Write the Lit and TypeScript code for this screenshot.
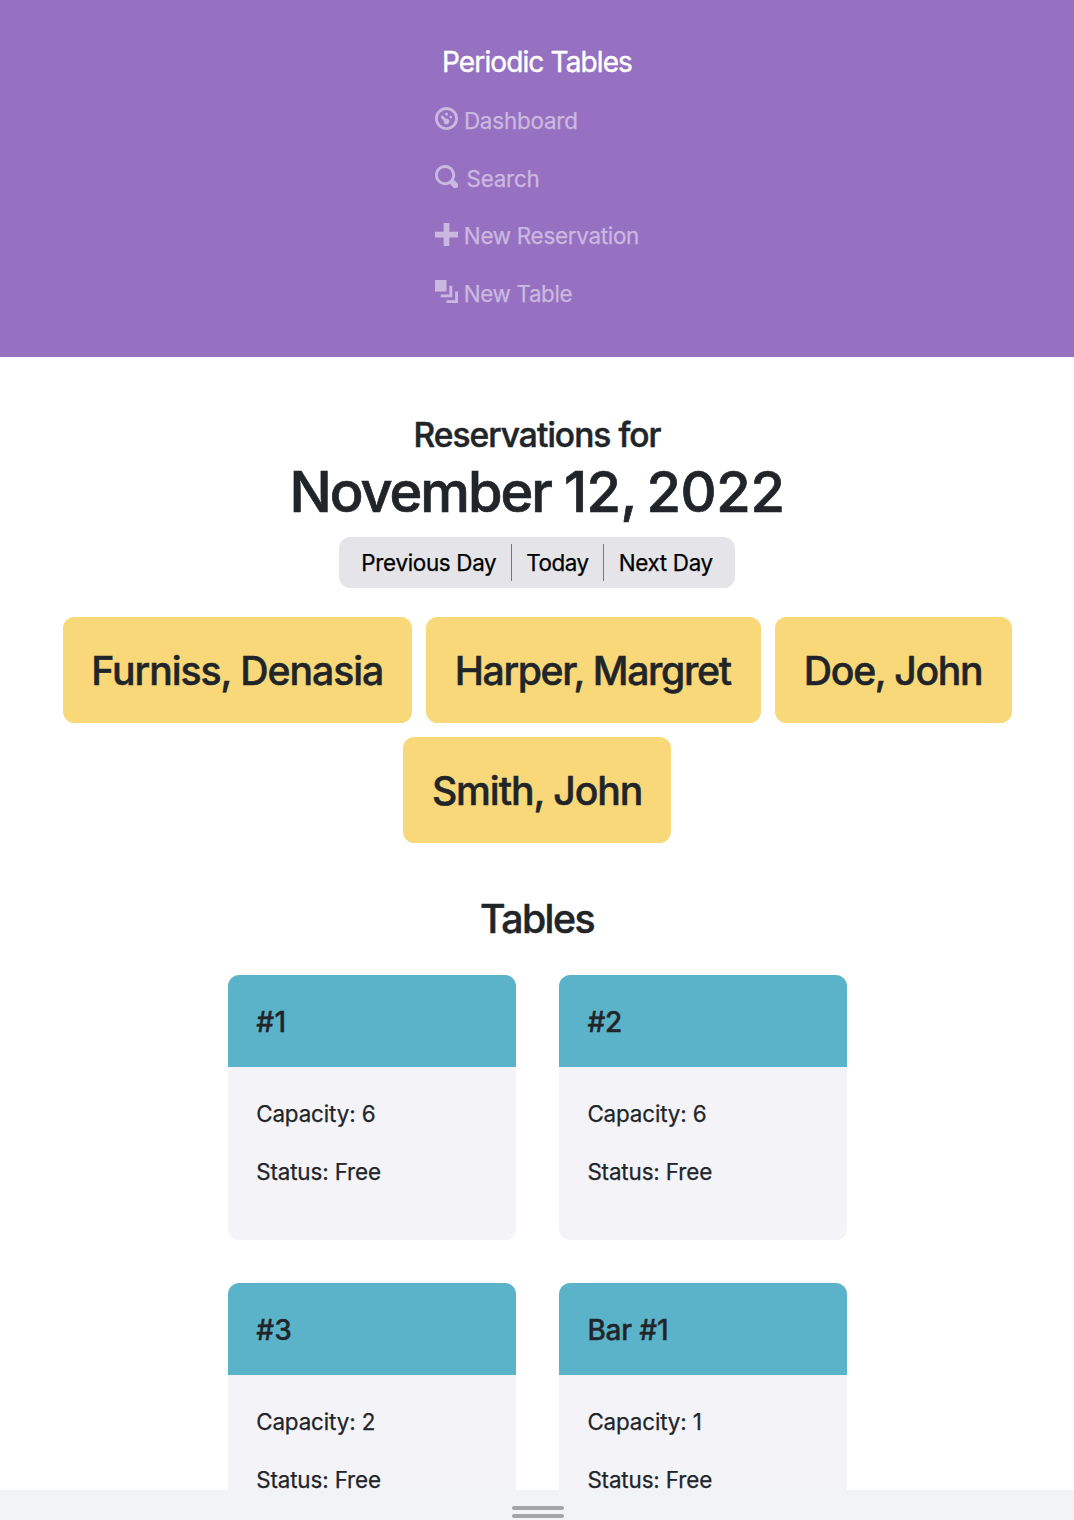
import { LitElement, html, svg, css, nothing } from "lit";
import { customElement, property } from "lit/decorators.js";
import { styleMap } from "lit/directives/style-map.js";

type IconName = "dashboard" | "search" | "plus" | "layers";

const icons = {
  dashboard: svg`<path fill-rule="evenodd" d="M4 0c-2.2 0-4 1.8-4 4s1.8 4 4 4 4-1.8 4-4-1.8-4-4-4zm0 1c1.66 0 3 1.34 3 3s-1.34 3-3 3-3-1.34-3-3 1.34-3 3-3z"/>
    <circle cx="4" cy="2.5" r=".5"/><circle cx="5.5" cy="3.5" r=".5"/>
    <path d="M2.34 3a.5.5 0 0 0-.19.84l.91.91c-.02.08-.06.16-.06.25 0 .55.45 1 1 1s1-.45 1-1-.45-1-1-1c-.09 0-.17.04-.25.06l-.91-.91a.5.5 0 0 0-.44-.16.5.5 0 0 0-.06 0z"/>`,
  search: svg`<path d="M3.5 0c-1.930 0-3.5 1.570-3.5 3.5s1.570 3.5 3.5 3.5c.59 0 1.170-.14 1.660-.41a1 1 0 0 0 .13.13l1 1a1.020 1.020 0 1 0 1.440-1.440l-1-1a1 1 0 0 0-.16-.13c.27-.49.44-1.060.44-1.660 0-1.930-1.550-3.5-3.5-3.5zm0 1c1.390 0 2.5 1.110 2.5 2.5 0 .66-.24 1.270-.66 1.720l-.03.03a1 1 0 0 0-.13.13c-.44.4-1.040.63-1.690.63-1.390 0-2.5-1.110-2.5-2.5s1.110-2.5 2.5-2.5z"/>`,
  plus: svg`<path d="M3 0v3h-3v2h3v3h2v-3h3v-2h-3v-3h-2z"/>`,
  layers: svg`<path d="M0 0v4h4v-4h-4zm5 2v3h-3v1h4v-4h-1zm2 2v3h-3v1h4v-4h-1z"/>`,
};

const spacing = (value: number) => styleMap({ letterSpacing: `${value}px` });

const navItems: { icon: IconName; label: string; tracking: number; gap: number }[] = [
  { icon: "dashboard", label: "Dashboard", tracking: -0.18, gap: 5.9 },
  { icon: "search", label: "Search", tracking: -0.2, gap: 8.5 },
  { icon: "plus", label: "New Reservation", tracking: -0.28, gap: 5.8 },
  { icon: "layers", label: "New Table", tracking: -0.37, gap: 5.8 },
];

const reservations = [
  { name: "Furniss, Denasia", tracking: -1.07, width: 349 },
  { name: "Harper, Margret", tracking: -1.37, width: 334.7 },
  { name: "Doe, John", tracking: -1.31, width: 236.4 },
  { name: "Smith, John", tracking: -1.08, width: 267.8 },
];

const tables = [
  { name: "#1", tracking: 0.4, capacity: 6, status: "Free" },
  { name: "#2", tracking: -0.3, capacity: 6, status: "Free" },
  { name: "#3", tracking: 0.3, capacity: 2, status: "Free" },
  { name: "Bar #1", tracking: -0.17, capacity: 1, status: "Free" },
];

@customElement("side-menu")
class SideMenu extends LitElement {
  static styles = css`
    :host { display: block; flex: none; }
    .bar {
      box-sizing: border-box; height: 357px; padding-top: 31.6px;
      background: #9771c1; color: #fff;
      display: flex; flex-direction: column; align-items: center;
    }
    .brand { font-size: 28px; -webkit-text-stroke: 0.4px currentColor; line-height: 60.4px; letter-spacing: -0.878px; white-space: nowrap; }
    .links { display: flex; flex-direction: column; width: 204px; margin: 0; padding: 0; list-style: none; }
    .link { display: flex; align-items: center; height: 57.6px; color: #cbb8e0; white-space: nowrap; }
    .icon { width: 23px; height: 23px; margin-bottom: 3.9px; fill: currentColor; flex: none; }
  `;
  render() {
    return html`<nav class="bar">
      <div class="brand">Periodic Tables</div>
      <ul class="links">
        ${navItems.map((item) => html`<li class="link" style=${styleMap({ gap: `${item.gap}px` })}>
          <svg class="icon" viewBox="0 0 8 8">${icons[item.icon]}</svg>
          <span style=${spacing(item.tracking)}>${item.label}</span>
        </li>`)}
      </ul>
    </nav>`;
  }
}

@customElement("table-card")
class TableCard extends LitElement {
  @property({ attribute: false }) table: (typeof tables)[number] | null = null;
  static styles = css`
    :host { display: block; }
    .card { height: 265px; border-radius: 11.5px; overflow: hidden; background: #f3f3f8; }
    .head {
      box-sizing: border-box; height: 92px; padding: 1.5px 28.4px 0;
      display: flex; align-items: center;
      background: #5ab3c8; font-size: 28px; font-weight: 500;
      -webkit-text-stroke: 0.35px currentColor;
    }
    .body { padding: 18px 28.4px 0; line-height: 57.6px; letter-spacing: -0.13px; }
    .line { margin: 0; }
  `;
  render() {
    const t = this.table;
    if (!t) return nothing;
    return html`<article class="card">
      <div class="head"><span style=${spacing(t.tracking)}>${t.name}</span></div>
      <div class="body">
        <p class="line">Capacity: ${t.capacity}</p>
        <p class="line">Status: ${t.status}</p>
      </div>
    </article>`;
  }
}

@customElement("app-root")
class AppRoot extends LitElement {
  static styles = css`
    :host {
      display: flex; flex-direction: column; height: 1520px; overflow: hidden;
      background: #fff; color: #212529;
      font-family: Inter, "Liberation Sans", sans-serif; font-size: 22.4px; font-weight: 400;
      -webkit-text-stroke: 0.25px currentColor;
    }
    .page { height: 1490px; flex: none; overflow: hidden; display: flex; flex-direction: column; }
    .content { flex: none; display: flex; flex-direction: column; align-items: center; padding-top: 58px; }
    .eyebrow, .date, .heading, .reservation { font-weight: 500; -webkit-text-stroke: 0.5px currentColor; }
    .eyebrow { margin: 0; font-size: 33.5px; line-height: 41.5px; letter-spacing: -0.95px; }
    .date { margin: 0.7px 0 0; font-size: 55.9px; line-height: 69px; white-space: pre; -webkit-text-stroke-width: 0.7px; }
    .month { letter-spacing: -2px; }
    .day { letter-spacing: -0.5px; word-spacing: -4.3px; }
    .year { letter-spacing: -0.35px; }
    .pager {
      box-sizing: border-box; display: flex; align-items: center;
      width: 395.7px; height: 51.5px; margin-top: 10.5px;
      border-radius: 11.5px; background: #e5e4e9; color: #000;
    }
    .step {
      box-sizing: border-box; height: 37.5px; padding: 0 0 0 14px;
      border: 0; border-left: 1px solid #77777a; background: none;
      font: inherit; line-height: 38.5px; color: inherit; text-align: left; white-space: nowrap;
      letter-spacing: -0.31px;
    }
    .prev { width: 172px; padding-left: 22.2px; border-left: 0; }
    .today { width: 92.1px; letter-spacing: -0.42px; }
    .next { flex: 1; padding-left: 14.4px; }
    .reservations {
      display: flex; flex-wrap: wrap; justify-content: center; gap: 14.4px;
      width: 1016px; margin-top: 29px; padding-left: 0.8px;
    }
    .reservation {
      box-sizing: border-box; height: 105.7px; padding: 1.4px 0 0 28.4px;
      display: flex; align-items: center; white-space: nowrap;
      border-radius: 11.5px; background: #f8d878;
      font-size: 39.2px;
    }
    .heading { margin: 52.4px 0 0; font-size: 39.2px; line-height: 48px; letter-spacing: -1.55px; }
    .tables { display: grid; grid-template-columns: 288px 288px; gap: 43.2px; margin-top: 31.6px; padding-left: 0.8px; }
    .drawer {
      height: 30px; flex: none; box-sizing: border-box; padding-top: 16px; background: #f1f3f5;
      display: flex; flex-direction: column; align-items: center; gap: 4px;
    }
    .grip { width: 52px; height: 4px; border-radius: 2px; background: #a5a5a5; margin-left: 2px; }
  `;
  render() {
    return html`
      <div class="page">
        <side-menu></side-menu>
        <main class="content">
          <h3 class="eyebrow">Reservations for</h3>
          <h1 class="date"><span class="month">November </span><span class="day">12, </span><span class="year">2022</span></h1>
          <div class="pager">
            <button class="step prev">Previous Day</button>
            <button class="step today">Today</button>
            <button class="step next">Next Day</button>
          </div>
          <div class="reservations">
            ${reservations.map((r) => html`<div class="reservation" style=${styleMap({ width: `${r.width}px`, letterSpacing: `${r.tracking}px` })}>${r.name}</div>`)}
          </div>
          <h2 class="heading">Tables</h2>
          <div class="tables">
            ${tables.map((t) => html`<table-card .table=${t}></table-card>`)}
          </div>
        </main>
      </div>
      <footer class="drawer"><div class="grip"></div><div class="grip"></div></footer>
    `;
  }
}
